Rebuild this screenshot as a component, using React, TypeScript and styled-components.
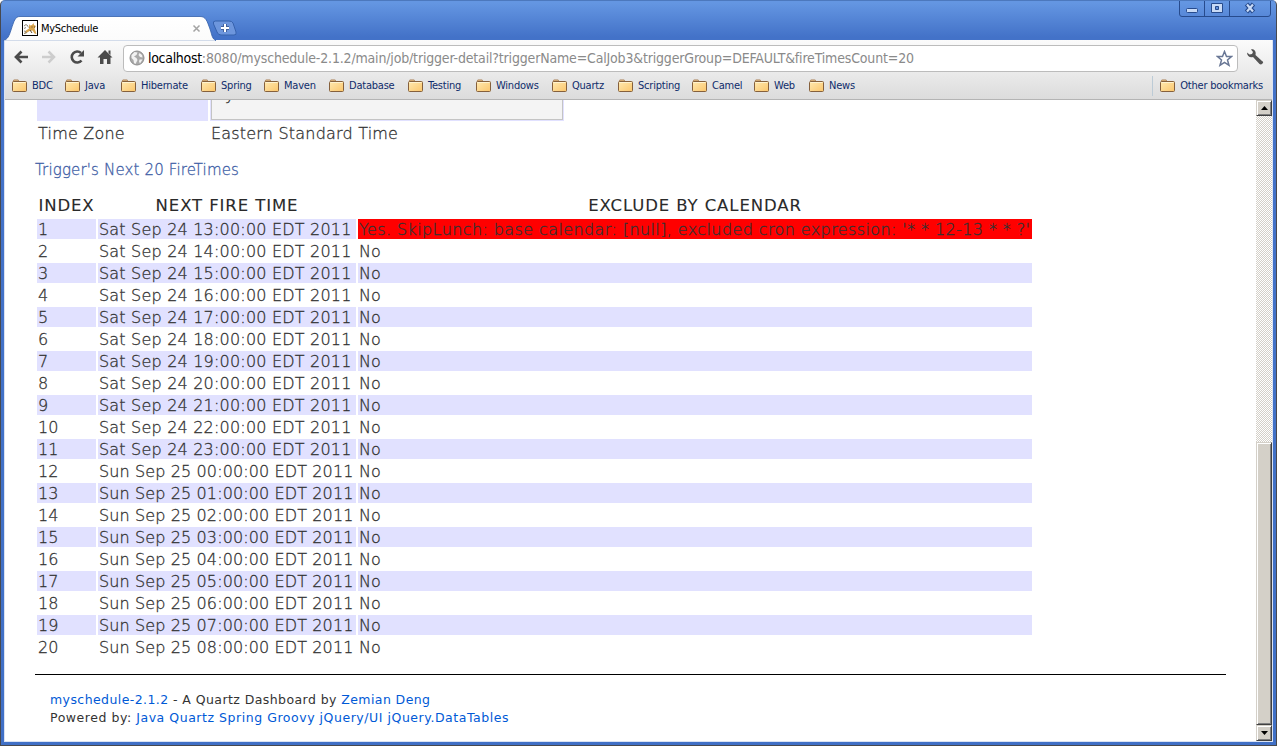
import React from 'react';
import styled, { createGlobalStyle } from 'styled-components';

const Global = createGlobalStyle`
  * { box-sizing: border-box; }
  html, body { margin: 0; padding: 0; overflow: hidden; }
  body { font-family: "DejaVu Sans", Verdana, sans-serif; color: #333; }
`;

const Window = styled.div`
  width: 1277px;
  height: 746px;
  display: flex;
  flex-direction: column;
  overflow: hidden;
  padding: 0 4px 3px 4px;
  background: linear-gradient(#6496e2 0, #6496e2 2px, #4372c8 36px, #4070c6 100%);
  border: 1px solid #47494f;
  border-top-color: #4c78bd;
  border-radius: 5px 5px 0 0;
`;
const TitleBar = styled.header`
  display: flex;
  height: 39px;
  margin-left: -2px;
  align-items: flex-end;
  flex: none;
`;
const Tab = styled.div`
  position: relative;
  display: flex;
  align-items: center;
  width: 213px;
  height: 24px;
  padding-left: 19px;
  & > svg.shape { position: absolute; left: 0; top: 0; z-index: 0; }
`;
const TabIcon = styled.svg`
  position: relative;
  flex: none;
`;
const TabTitle = styled.span`
  position: relative;
  margin-left: 3px;
  padding-top: 1px;
  width: 151px;
  font: 11px/14px "DejaVu Sans Condensed", "DejaVu Sans", sans-serif;
  letter-spacing: -0.28px;
  color: #000;
`;
const TabClose = styled.svg`
  position: relative;
  flex: none;
`;
const NewTab = styled.svg`
  margin: 0 0 4px -4px;
`;
const Spacer = styled.div`
  flex: 1;
`;
const WindowButtons = styled.svg`
  align-self: flex-start;
  margin-top: -1px;
`;

const Client = styled.div`
  flex: 1;
  min-height: 0;
  display: flex;
  flex-direction: column;
  margin: 0 -1px 0 -1px;
  border: 1px solid #d9e2f2;
  border-top: 0;
  background: #fff;
`;
const Chrome = styled.div`
  flex: none;
  height: 60px;
  background: linear-gradient(#fbfbfb, #ececec 50%, #dcdcdc);
  border-bottom: 1px solid #b4b4b4;
`;
const Toolbar = styled.div`
  display: flex;
  align-items: center;
  height: 34px;
  padding: 0 8px 0 8px;
`;
const NavIcon = styled.svg`
  flex: none;
  margin-right: 12px;
`;
const Omnibox = styled.div`
  display: flex;
  align-items: center;
  width: 1115px;
  height: 27px;
  margin-top: 2px;
  margin-left: -2px;
  padding: 0 4px 0 5px;
  border: 1px solid #bcbcbc;
  border-radius: 4px;
  background: #fff;
`;
const Url = styled.span`
  flex: 1;
  margin-left: 3px;
  font: 14px/18px "DejaVu Sans Condensed", "DejaVu Sans", sans-serif;
  letter-spacing: -0.17px;
  white-space: nowrap;
  color: #8a8a8a;
  b { font-weight: 400; color: #000; letter-spacing: -0.3px; }
`;
const Bookmarks = styled.nav`
  display: flex;
  align-items: center;
  height: 23px;
  padding: 0 9px 0 7px;
`;
const Bookmark = styled.a<{ $w?: number }>`
  display: flex;
  align-items: center;
  flex: none;
  gap: 4px;
  width: ${(p) => (p.$w ? p.$w + 'px' : 'auto')};
  font: 11px/14px "DejaVu Sans Condensed", "DejaVu Sans", sans-serif;
  letter-spacing: -0.22px;
  color: #0f2c6b;
  white-space: nowrap;
`;
const Divider = styled.i`
  width: 1px;
  height: 20px;
  margin-right: 7px;
  background: #bccbd6;
`;

const Viewport = styled.div`
  flex: 1;
  min-height: 0;
  display: flex;
`;
const Page = styled.main`
  flex: 1;
  min-width: 0;
  overflow: hidden;
  padding: 0 30px;
  font-size: 16px;
  font-weight: 200;
  -webkit-text-stroke: 0.3px;
`;
const DetailRow = styled.div`
  display: grid;
  grid-template-columns: 171px 354px;
  gap: 2px;
  padding-left: 2px;
  margin-bottom: 2px;
`;
const DetailCell = styled.div<{ $shade?: boolean }>`
  height: ${(p) => (p.$shade ? 21 : 20)}px;
  line-height: 22px;
  padding-left: 1px;
  white-space: nowrap;
  letter-spacing: 0.2px;
  background: ${(p) => (p.$shade ? '#e1e1ff' : 'transparent')};
`;
const ValueBox = styled.div`
  width: 352px;
  height: 20px;
  padding-left: 13px;
  border: 1px solid #c4c4c4;
  border-top: 0;
  background: #f4f4f4;
  line-height: 20px;
  overflow: hidden;
  & > span { display: block; margin-top: -15px; }
`;
const Heading = styled.h3`
  margin: 17px 0 15px;
  height: 20px;
  font-size: 15px;
  line-height: 20px;
  font-weight: 200;
  letter-spacing: 0.16px;
  color: #3f60a6;
`;
const Table = styled.div`
  display: grid;
  grid-template-columns: 59px 258px 674px;
  gap: 2px;
  padding-left: 2px;
`;
const Th = styled.div`
  height: 22px;
  padding-top: 1px;
  line-height: 20px;
  text-align: center;
  white-space: nowrap;
  font-size: 16.5px;
  font-weight: 400;
  letter-spacing: 0.9px;
  color: #2a2a2a;
  -webkit-text-stroke: 0.1px #2a2a2a;
`;
const Td = styled.div<{ $shade?: boolean; $alert?: boolean; $ls?: number }>`
  height: 20px;
  padding-left: 1px;
  line-height: 22px;
  white-space: nowrap;
  letter-spacing: ${(p) => p.$ls ?? 0}px;
  background: ${(p) => (p.$alert ? '#ff0000' : p.$shade ? '#e1e1ff' : 'transparent')};
`;
const Footer = styled.footer`
  margin-top: 17px;
  padding: 16px 15px 0;
  border-top: 1px solid #000;
  font-size: 12.5px;
  font-weight: 400;
  -webkit-text-stroke: 0;
  line-height: 18px;
  a { color: #0059d6; }
`;
const FooterLine = styled.div<{ $ls: number }>`
  letter-spacing: ${(p) => p.$ls}px;
`;

const Scrollbar = styled.div`
  display: flex;
  flex-direction: column;
  width: 16px;
  background: repeating-conic-gradient(#d4d0c8 0 25%, #fff 0 50%) 0 0 / 2px 2px;
`;
const ScrollPart = styled.div<{ $h: number }>`
  flex: none;
  display: flex;
  align-items: center;
  justify-content: center;
  height: ${(p) => p.$h}px;
  background: #d4d0c8;
  border: 1px solid;
  border-color: #d4d0c8 #404040 #404040 #d4d0c8;
  box-shadow: inset 1px 1px #fff, inset -1px -1px #808080;
`;

const Folder = () => (
  <svg width="16" height="14" viewBox="0 0 16 14">
    <defs>
      <linearGradient id="folder" x1="0" y1="0" x2="1" y2="1">
        <stop offset="0" stopColor="#ffe9b0" />
        <stop offset="1" stopColor="#fbc66c" />
      </linearGradient>
    </defs>
    <path d="M1.5 3V1.5q0-.5.5-.5h4q.5 0 .5.5V3" fill="#f5cf8d" stroke="#a97f54" />
    <rect x=".5" y="2.500" width="14" height="10" rx="1" fill="url(#folder)" stroke="#85603c" />
    <path d="M1.5 3.500h12" stroke="#fff3cf" />
  </svg>
);

const bookmarks: [string, number][] = [
  ['BDC', 53], ['Java', 56], ['Hibernate', 80], ['Spring', 63], ['Maven', 65],
  ['Database', 79], ['Testing', 68], ['Windows', 76], ['Quartz', 66],
  ['Scripting', 74], ['Camel', 62], ['Web', 55], ['News', 50],
];

const times = Array.from({ length: 20 }, (_, i) => {
  const hour = 13 + i;
  const day = hour < 24 ? 'Sat Sep 24' : 'Sun Sep 25';
  return `${day} ${String(hour % 24).padStart(2, '0')}:00:00 EDT 2011`;
});

export default function App() {
  return (
    <>
      <Global />
      <Window>
        <TitleBar>
          <Tab>
            <svg className="shape" width="213" height="25" viewBox="0 0 213 25">
              <defs>
                <linearGradient id="tab" x1="0" y1="0" x2="0" y2="1">
                  <stop offset="0" stopColor="#fff" />
                  <stop offset="1" stopColor="#fbfbfb" />
                </linearGradient>
              </defs>
              <path d="M0 25C5 23 6 20 8 14C11 5 12 .5 17 .5H197C203 .5 204 5 207 13C209 19 209 23 213 24.500V25Z" fill="url(#tab)" stroke="#345fa9" strokeWidth=".8" />
              <path d="M1 25h211" stroke="#fbfbfb" />
            </svg>
            <TabIcon width="16" height="16" viewBox="0 0 16 16">
              <rect x=".5" y=".5" width="15" height="15" fill="#fff" stroke="#000" />
              <path d="M7 4l1 1.500 2-.5 1.500-2 .5 2 2 1-1.500 2.500 1 2.500 1 3-2-.5-2-3-3 .5-3 2-2.500 1 2-3.500 3-2z" fill="#d9a54e" />
              <path d="M2 6l2-1.500 2 1.500M2 8.500l2-1M2 11l2 .5M2 13.500l3-1" fill="none" stroke="#8a8578" />
              <path d="M9.500 7h1M12 7h1M8 10l2 3M6 6.500l1 1" stroke="#5d4a2c" />
            </TabIcon>
            <TabTitle>MySchedule</TabTitle>
            <TabClose width="9" height="9" viewBox="0 0 9 9">
              <path d="M1.500 1.500l6 6m0-6l-6 6" stroke="#a3a3a3" strokeWidth="1.500" />
            </TabClose>
          </Tab>
          <NewTab width="26" height="16" viewBox="0 0 26 16">
            <path d="M3.500 1H17Q20 1 21 3L24 12Q25 15 22 15H9Q6 15 5 12L1.500 4Q.500 1 3.500 1Z" fill="#6d96dd" stroke="#3662ad" />
            <path d="M13 4v8M9 8h8" stroke="#41609c" strokeWidth="4" />
            <path d="M13 4v8M9 8h8" stroke="#fff" strokeWidth="2" />
          </NewTab>
          <Spacer />
          <WindowButtons width="94" height="18" viewBox="0 0 94 18">
            <path d="M1.500 0V14Q1.500 16.500 4 16.500H90Q92.500 16.500 92.500 14V0M26.500 0V16M51.500 0V16" fill="none" stroke="#274b8d" />
            <rect x="8.500" y="8.500" width="11" height="4" rx="1" fill="#c8daf6" stroke="#274b8d" />
            <path d="M33.500 3.500h11v9h-11z" fill="#c8daf6" stroke="#274b8d" />
            <path d="M37.500 6.500h3v3h-3z" fill="#5f8edb" stroke="#274b8d" />
            <path d="M68.500 4l7 8m0-8l-7 8" stroke="#274b8d" strokeWidth="4.500" />
            <path d="M69 4.500l6 7m0-7l-6 7" stroke="#c8daf6" strokeWidth="2.200" />
          </WindowButtons>
        </TitleBar>
        <Client>
          <Chrome>
            <Toolbar>
              <NavIcon width="16" height="16" viewBox="0 0 16 16">
                <path d="M15 8H4M8.500 2.500L3 8l5.500 5.500" fill="none" stroke="#4b4b4b" strokeWidth="2.700" />
              </NavIcon>
              <NavIcon width="16" height="16" viewBox="0 0 16 16">
                <path d="M1 8h11M7.500 2.500L13 8l-5.500 5.500" fill="none" stroke="#cdcdcd" strokeWidth="2.500" />
              </NavIcon>
              <NavIcon width="16" height="16" viewBox="0 0 16 16">
                <path d="M12.500 11.500A5.500 5.500 0 1 1 12 4" fill="none" stroke="#4b4b4b" strokeWidth="2.600" />
                <path d="M15 1v6.500H8.500z" fill="#4b4b4b" />
              </NavIcon>
              <NavIcon width="16" height="16" viewBox="0 0 16 16">
                <path d="M8 1L15.500 8.500H13.500V15H10V10H6.500V15H3V8.500H.500ZM11.500 1.500H13.500V6L11.500 4Z" fill="#4b4b4b" />
              </NavIcon>
              <Omnibox>
                <svg width="16" height="16" viewBox="0 0 16 16">
                  <circle cx="8" cy="8" r="7" fill="#a9a9a9" stroke="#8f8f8f" strokeWidth="1" />
                  <path d="M2.500 5l3-3 3 .5-1 2.500-2.500 1.500 2.500 1.500 1 2-2 4-1.500-1-.5-3-2-2zM10.500 3l2.500 2 .5 2.500-2.500-.5-1.500-2zM10.500 9.500l3 0-2.500 4-1-2z" fill="#f2f2f2" />
                </svg>
                <Url><b>localhost</b>:8080/myschedule-2.1.2/main/job/trigger-detail?triggerName=CalJob3&amp;triggerGroup=DEFAULT&amp;fireTimesCount=20</Url>
                <svg width="17" height="17" viewBox="0 0 17 17">
                  <path d="M8.500 1.500l2 5h5l-4 3.500 1.500 5.300-4.500-3-4.500 3L5.500 10l-4-3.500h5z" fill="#fff" stroke="#697795" strokeWidth="1.500" />
                </svg>
              </Omnibox>
              <Spacer />
              <svg width="18" height="18" viewBox="0 0 18 18">
                <path d="M5 1.500L7 4 6 6 3.500 6.500 1 4.500C1 8 4 10 7 9L13.500 16Q15 17 16.500 15.500T16 13L9.500 7C10.500 3.500 8 .500 5 1.500Z" fill="#545454" />
              </svg>
            </Toolbar>
            <Bookmarks>
              {bookmarks.map(([name, w]) => (
                <Bookmark key={name} $w={w}><Folder />{name}</Bookmark>
              ))}
              <Spacer />
              <Divider />
              <Bookmark><Folder />Other bookmarks</Bookmark>
            </Bookmarks>
          </Chrome>
          <Viewport>
            <Page>
              <DetailRow>
                <DetailCell $shade />
                <DetailCell $shade><ValueBox><span>y</span></ValueBox></DetailCell>
              </DetailRow>
              <DetailRow>
                <DetailCell>Time Zone</DetailCell>
                <DetailCell>Eastern Standard Time</DetailCell>
              </DetailRow>
              <Heading>Trigger's Next 20 FireTimes</Heading>
              <Table>
                <Th>INDEX</Th>
                <Th>NEXT FIRE TIME</Th>
                <Th>EXCLUDE BY CALENDAR</Th>
                {times.map((t, i) => (
                  <React.Fragment key={t}>
                    <Td $shade={i % 2 === 0}>{i + 1}</Td>
                    <Td $shade={i % 2 === 0} $ls={i < 11 ? 0.2 : 0.12}>{t}</Td>
                    <Td $shade={i % 2 === 0} $alert={i === 0} $ls={i === 0 ? 0.4 : 0}>
                      {i === 0 ? "Yes. SkipLunch: base calendar: [null], excluded cron expression: '* * 12-13 * * ?'" : 'No'}
                    </Td>
                  </React.Fragment>
                ))}
              </Table>
              <Footer>
                <FooterLine $ls={0.42}><a>myschedule-2.1.2</a> - A Quartz Dashboard by <a>Zemian Deng</a></FooterLine>
                <FooterLine $ls={0.54}>Powered by: <a>Java</a> <a>Quartz</a> <a>Spring</a> <a>Groovy</a> <a>jQuery/UI</a> <a>jQuery.DataTables</a></FooterLine>
              </Footer>
            </Page>
            <Scrollbar>
              <ScrollPart $h={16}>
                <svg width="7" height="4" viewBox="0 0 7 4"><path d="M0 4L3.500 0 7 4z" fill="#000" /></svg>
              </ScrollPart>
              <Spacer />
              <ScrollPart $h={283} />
              <ScrollPart $h={16}>
                <svg width="7" height="4" viewBox="0 0 7 4"><path d="M0 0L3.500 4 7 0z" fill="#000" /></svg>
              </ScrollPart>
            </Scrollbar>
          </Viewport>
        </Client>
      </Window>
    </>
  );
}
